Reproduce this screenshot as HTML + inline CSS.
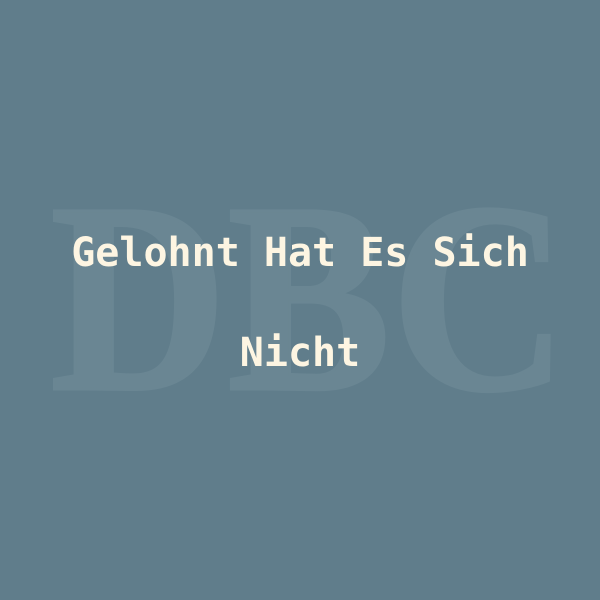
<!DOCTYPE html>
<html><head><style>
html,body{margin:0;padding:0;}
body{width:600px;height:600px;background:#607d8b;position:relative;overflow:hidden;}
svg{position:absolute;left:0;top:0;}
.t{position:absolute;left:0;width:600px;text-align:center;font-family:"DejaVu Sans Mono","Liberation Mono",monospace;font-weight:bold;font-size:40px;color:#fdf5e2;line-height:1;}
</style></head><body>
<svg width="600" height="600"><text x="50" y="389" font-family="Liberation Serif, serif" font-weight="bold" font-size="272" fill="#6a8693" stroke="#6a8693" stroke-width="3" textLength="518" lengthAdjust="spacingAndGlyphs">DBC</text></svg>
<div class="t" style="top:233px">Gelohnt Hat Es Sich</div>
<div class="t" style="top:333px">Nicht</div>
</body></html>
